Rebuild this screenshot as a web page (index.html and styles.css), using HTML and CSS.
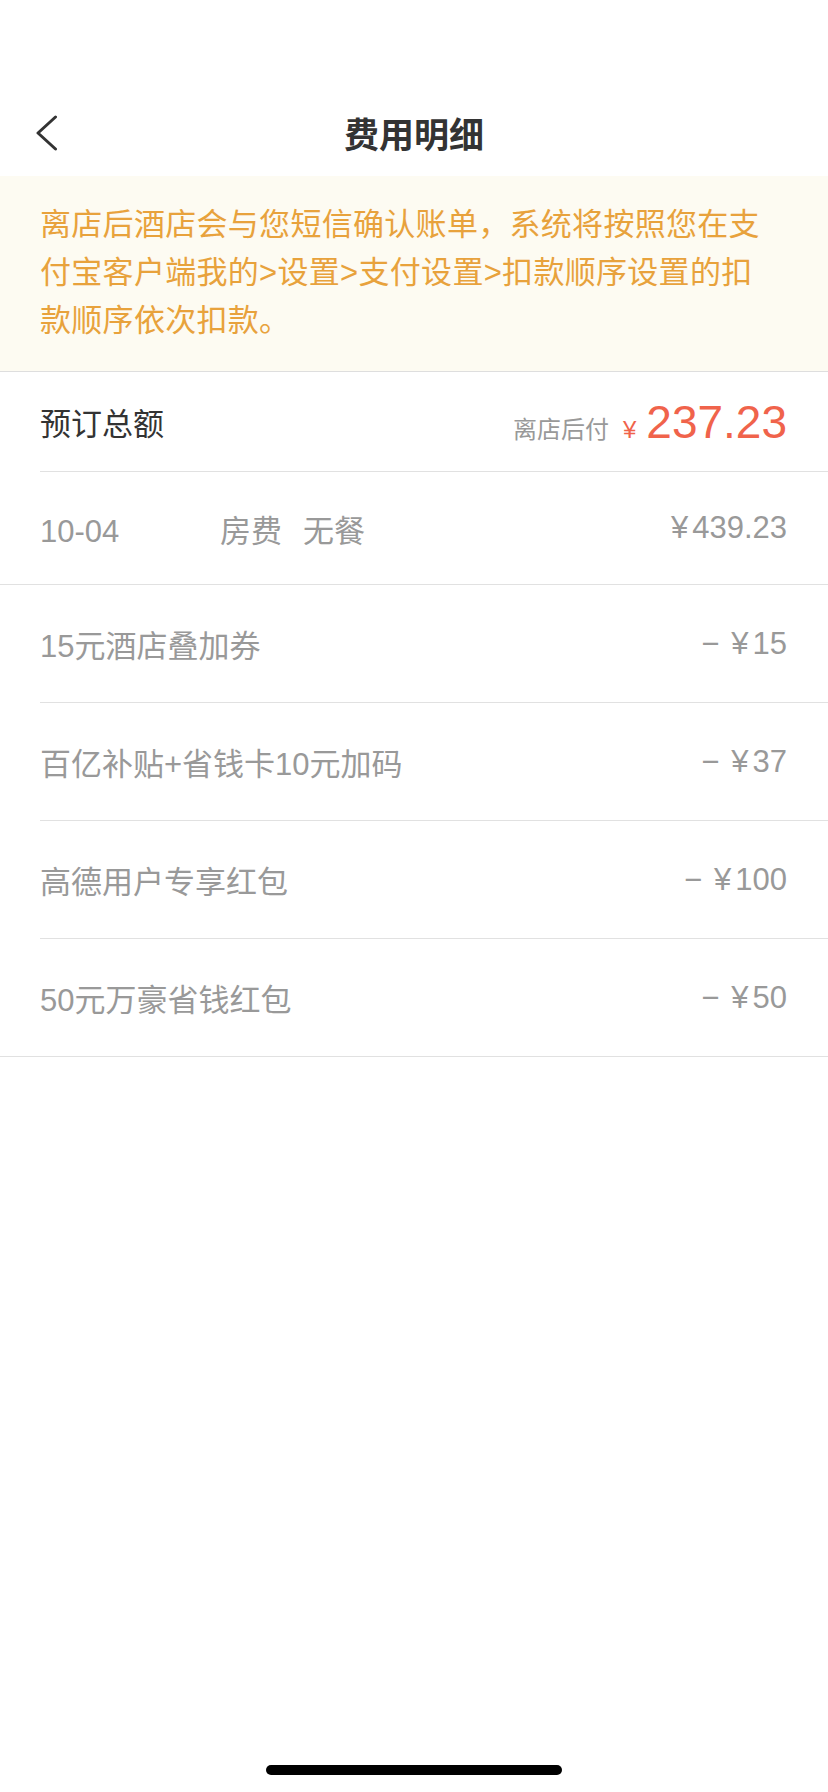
FILE: index.html
```html
<!DOCTYPE html>
<html lang="zh-CN">
<head>
    <meta charset="UTF-8">
    <meta name="viewport" content="width=device-width, initial-scale=1.0">
    <title>费用明细</title>
    <link rel="stylesheet" href="styles.css">
</head>
<body>

    <div class="page">
        <!-- Status bar area -->
        <div class="status-bar"></div>

        <!-- Navigation -->
        <header class="nav-bar">
            <a class="back-btn" href="#">
                <svg width="22" height="36" viewBox="0 0 22 36">
                    <polyline points="19.5,2 2,18 19.5,34" fill="none" stroke="#333" stroke-width="3" stroke-linecap="round" stroke-linejoin="round"/>
                </svg>
            </a>
            <h1 class="nav-title">费用明细</h1>
            <span></span>
        </header>

        <!-- Notice -->
        <div class="notice">
            <p>离店后酒店会与您短信确认账单，系统将按照您在支付宝客户端我的&gt;设置&gt;支付设置&gt;扣款顺序设置的扣款顺序依次扣款。</p>
        </div>

        <!-- Summary -->
        <section class="summary">
            <div class="total-row">
                <span class="total-label">预订总额</span>
                <div class="total-amount">
                    <span class="pay-note">离店后付</span>
                    <span class="total-yen">¥</span>
                    <span class="total-value">237.23</span>
                </div>
            </div>
            <div class="night-row">
                <span class="night-info"><span class="night-date">10-04</span>房费<span class="night-meal">无餐</span></span>
                <span class="price"><span class="yen">¥</span>439.23</span>
            </div>
        </section>

        <!-- Discounts -->
        <ul class="discounts">
            <li class="discount-row">
                <span class="discount-name">15元酒店叠加券</span>
                <span class="price"><span class="minus">−</span><span class="yen">¥</span>15</span>
            </li>
            <li class="discount-row">
                <span class="discount-name">百亿补贴+省钱卡10元加码</span>
                <span class="price"><span class="minus">−</span><span class="yen">¥</span>37</span>
            </li>
            <li class="discount-row">
                <span class="discount-name">高德用户专享红包</span>
                <span class="price"><span class="minus">−</span><span class="yen">¥</span>100</span>
            </li>
            <li class="discount-row">
                <span class="discount-name">50元万豪省钱红包</span>
                <span class="price"><span class="minus">−</span><span class="yen">¥</span>50</span>
            </li>
        </ul>

        <div class="home-indicator"></div>
    </div>

</body>
</html>
```

FILE: styles.css
```css
body {
    margin: 0;
    background-color: #fff;
    font-family: "Liberation Sans", "Noto Sans CJK SC", sans-serif;
    color: #333;
}

.page {
    min-height: 100vh;
}

.status-bar {
    height: 88px;
}

/* Navigation */
.nav-bar {
    height: 88px;
    display: grid;
    grid-template-columns: 1fr auto 1fr;
    align-items: center;
}

.back-btn {
    display: flex;
    align-items: center;
    padding-left: 36px;
    padding-top: 2px;
}

.nav-title {
    margin: 0;
    font-size: 35px;
    font-weight: bold;
    color: #333;
}

/* Notice banner */
.notice {
    background-color: #fdfbf2;
    padding: 25px 60px 26px 40px;
    border-bottom: 1px solid #dedede;
}

.notice p {
    margin: 0;
    font-size: 31px;
    letter-spacing: 0.3px;
    line-height: 48px;
    color: #e8a23c;
}

/* Summary */
.summary {
    border-bottom: 1px solid #e1e1e1;
}

.total-row {
    height: 99px;
    margin-left: 40px;
    padding-right: 41px;
    display: flex;
    align-items: center;
    justify-content: space-between;
    border-bottom: 1px solid #e1e1e1;
}

.total-label {
    font-size: 31px;
    color: #333;
}

.total-amount {
    display: flex;
    align-items: baseline;
    color: #f0634b;
}

.pay-note {
    font-size: 24px;
    color: #999;
    margin-right: 14px;
}

.total-yen {
    font-size: 24px;
    margin-right: 10px;
}

.total-value {
    font-size: 46px;
}

.night-row {
    height: 112px;
    margin-left: 40px;
    padding-right: 41px;
    display: flex;
    align-items: center;
    font-size: 31px;
    color: #999;
}

.night-date {
    display: inline-block;
    width: 180px;
}

.night-meal {
    margin-left: 21px;
}

.price {
    margin-left: auto;
    font-size: 31px;
    color: #999;
}

.yen {
    margin-right: 4px;
}

.minus {
    margin-right: 12px;
}

/* Discounts */
.discounts {
    list-style: none;
    margin: 0;
    padding: 0;
    border-bottom: 1px solid #e1e1e1;
}

.discount-row {
    height: 117px;
    margin-left: 40px;
    padding-right: 41px;
    display: flex;
    align-items: center;
    border-bottom: 1px solid #e1e1e1;
}

.discount-row:last-child {
    border-bottom: none;
}

.discount-name {
    font-size: 31px;
    color: #999;
}

.home-indicator {
    position: fixed;
    left: 50%;
    bottom: 17px;
    width: 296px;
    height: 10px;
    margin-left: -148px;
    border-radius: 5px;
    background-color: #000;
}
```
